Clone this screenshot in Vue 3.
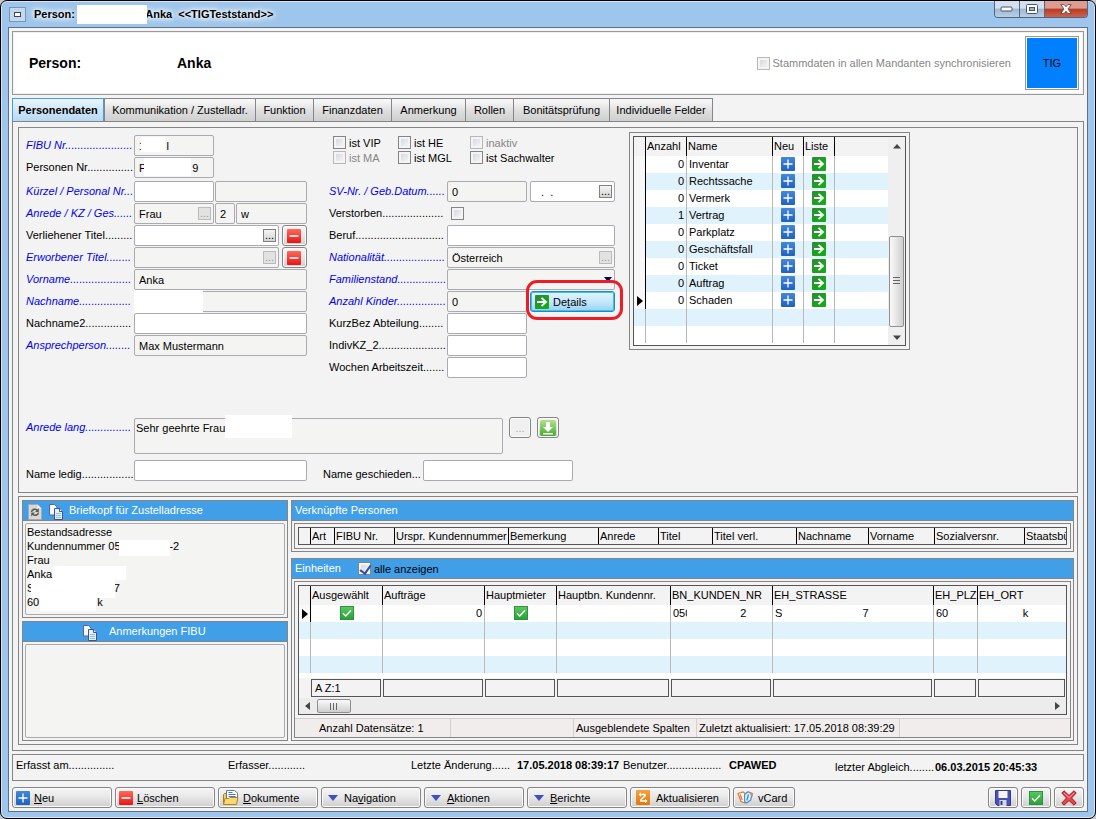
<script setup>
import { ref } from 'vue'

const dots = (n) => '.'.repeat(n)
const gap = (n) => '\u00a0'.repeat(n)

const tabs = [
  'Personendaten',
  'Kommunikation / Zustelladr.',
  'Funktion',
  'Finanzdaten',
  'Anmerkung',
  'Rollen',
  'Bonitätsprüfung',
  'Individuelle Felder',
]
const activeTab = ref(0)

const flags = [
  { id: 'vip', text: 'ist VIP' },
  { id: 'he', text: 'ist HE' },
  { id: 'inaktiv', text: 'inaktiv', off: true },
  { id: 'ma', text: 'ist MA', off: true },
  { id: 'mgl', text: 'ist MGL' },
  { id: 'sach', text: 'ist Sachwalter' },
]

const objects = [
  [0, 'Inventar'],
  [0, 'Rechtssache'],
  [0, 'Vermerk'],
  [1, 'Vertrag'],
  [0, 'Parkplatz'],
  [0, 'Geschäftsfall'],
  [0, 'Ticket'],
  [0, 'Auftrag'],
  [0, 'Schaden'],
]

const linkedCols = [
  'Art', 'FIBU Nr.', 'Urspr. Kundennummer', 'Bemerkung', 'Anrede', 'Titel',
  'Titel verl.', 'Nachname', 'Vorname', 'Sozialversnr.', 'Staatsbü',
]
const unitCols = [
  'Ausgewählt', 'Aufträge', 'Hauptmieter', 'Hauptbn. Kundennr.',
  'BN_KUNDEN_NR', 'EH_STRASSE', 'EH_PLZ', 'EH_ORT',
]
const salutation = ref('Sehr geehrte Frau')
const showAll = ref(true)
</script>

<template>
  <div class="window">
    <svg class="defs" width="0" height="0" aria-hidden="true">
      <defs>
        <linearGradient id="gBlue" x1="0" y1="0" x2="0" y2="1"><stop offset="0" stop-color="#4488d8" /><stop offset="1" stop-color="#1f62c0" /></linearGradient>
        <linearGradient id="gGreen" x1="0" y1="0" x2="1" y2="1"><stop offset="0" stop-color="#2f8a3a" /><stop offset="1" stop-color="#10b010" /></linearGradient>
        <linearGradient id="gRed" x1="0" y1="0" x2="0" y2="1"><stop offset="0" stop-color="#ff6a5c" /><stop offset="1" stop-color="#e81414" /></linearGradient>
        <linearGradient id="gCheck" x1="0" y1="0" x2="0" y2="1"><stop offset="0" stop-color="#5cc860" /><stop offset="1" stop-color="#28a038" /></linearGradient>
        <linearGradient id="gDown" x1="0" y1="0" x2="0" y2="1"><stop offset="0" stop-color="#b4e08c" /><stop offset="1" stop-color="#3fae2c" /></linearGradient>
        <linearGradient id="gOrange" x1="0" y1="0" x2="0" y2="1"><stop offset="0" stop-color="#f8a040" /><stop offset="1" stop-color="#e07808" /></linearGradient>
      </defs>
      <symbol id="iPlus" viewBox="0 0 14 14">
        <rect width="14" height="14" rx="1" fill="url(#gBlue)" /><path d="M7 2.5v9M2.5 7h9" stroke="#fff" stroke-width="1.3" />
      </symbol>
      <symbol id="iArrow" viewBox="0 0 14 14">
        <rect width="14" height="14" rx="1" fill="url(#gGreen)" /><path d="M2 7h9M6.500 2.800L11 7l-4.500 4.200" fill="none" stroke="#fff" stroke-width="1.800" />
      </symbol>
      <symbol id="iMinus" viewBox="0 0 14 14">
        <rect width="14" height="14" rx="1" fill="url(#gRed)" /><path d="M2.500 7h9" stroke="#fff" stroke-width="1.600" />
      </symbol>
      <symbol id="iCheck" viewBox="0 0 14 14">
        <rect x=".5" y=".5" width="13" height="13" fill="url(#gCheck)" stroke="#2c9440" /><path d="M3 7.200l2.800 2.800L11 4.200" fill="none" stroke="#fff" stroke-width="1.300" />
      </symbol>
      <symbol id="iDown" viewBox="0 0 16 16">
        <rect width="16" height="16" rx="2" fill="url(#gDown)" /><path d="M6 2h4v5h3l-5 5-5-5h3zM3 13h10v1.500H3z" fill="#fff" />
      </symbol>
      <symbol id="iTri" viewBox="0 0 10 6"><path d="M0 0h10L5 6z" fill="#3c4fc4" /></symbol>
      <symbol id="iCopy" viewBox="0 0 15 16">
        <path d="M1.500.5h5l2.500 2.500v8H1.500z" fill="#f4f8ff" stroke="#5a6498" /><path d="M6.500 4.500h5l3 3v8h-8z" fill="#e4f0fe" stroke="#44508a" /><path d="M11.500 4.500v3h3" fill="#fff" stroke="#44508a" /><path d="M8 9.500h5M8 11.500h5M8 13.500h5" stroke="#8ac0f4" />
      </symbol>
      <symbol id="iReload" viewBox="0 0 14 16">
        <path d="M.5.500h9l4 4v11H.5z" fill="#d8d8d4" stroke="#a8a8a8" /><path d="M9.500.500v4h4z" fill="#f6f6f6" /><path d="M3.500 8c.4-2.800 4-3.600 5.800-1.700M10.500 8.500c-.4 2.800-4 3.600-5.800 1.700" fill="none" stroke="#5c5c5c" stroke-width="1.600" /><path d="M10.800 4v4H7zM3.200 12.500v-4H7z" fill="#5c5c5c" />
      </symbol>
      <symbol id="iDocs" viewBox="0 0 17 17">
        <path d="M1.500 15.500V5.500l1-1H7l1 1" fill="#f0cf60" stroke="#a87c18" /><path d="M4.500 1.500h8l3 2.500v8h-11z" fill="#fff" stroke="#5878b0" /><path d="M6.500 3.500h4M6.500 5.500h7M6.500 7.500h7" stroke="#4878c8" /><path d="M1.500 15.500l1.500-6h4l1-1h8l-1.500 7z" fill="#f8d870" stroke="#b08420" />
      </symbol>
      <symbol id="iSync" viewBox="0 0 14 15">
        <rect width="14" height="15" rx="1" fill="url(#gOrange)" /><path d="M4 4.500h5v1.500L5 9.500V11h5" fill="none" stroke="#fff" stroke-width="1.600" /><path d="M2.500 4.500L5 2.300v4.400zM11.500 11L9 8.800v4.400z" fill="#fff" />
      </symbol>
      <symbol id="iCard" viewBox="0 0 17 13">
        <path d="M1 2.500l5-1.500 3 2-1 9-4-1.500z" fill="#fff" stroke="#e07828" stroke-width="1.200" /><path d="M7.500 3.500L11 .8l4.500 2-2 6.500-4 2.700-2-1.500z" fill="#d8ecfc" stroke="#4a90cc" stroke-width="1.200" /><path d="M11.500 3.500L9.800 9.500" fill="none" stroke="#3c86c8" stroke-width="1.200" /><path d="M3.200 3.500l2 5.500" stroke="#e86820" stroke-width="1.200" /><circle cx="14.500" cy="3" r="1.500" fill="#f08838" />
      </symbol>
      <symbol id="iSave" viewBox="0 0 16 16">
        <path d="M.5.500h15v15h-13l-2-2z" fill="#4c50b0" stroke="#363a8c" /><path d="M3.500 1h9v7h-9z" fill="#f4f6fc" /><path d="M4.500 10h7v6h-7z" fill="#d4d8ea" /><path d="M5.500 11h2v4h-2z" fill="#363a8c" />
      </symbol>
      <symbol id="iCross" viewBox="0 0 16 16">
        <path d="M3 .8L8 5.500 13 .8 15.200 3 10.500 8l4.700 5-2.200 2.200L8 10.500l-5 4.700L.8 13l4.700-5L.8 3z" fill="#e8444c" stroke="#a81420" /><path d="M3 3l5 4.600L13 3" fill="none" stroke="#f8a0a4" />
      </symbol>
      <symbol id="iUp" viewBox="0 0 8 5"><path d="M0 4.500L4 0l4 4.500z" fill="#444" /></symbol>
    </svg>

    <header class="titlebar">
      <button class="sysmenu" aria-label="Systemmenü"><span></span></button>
      <h1 class="caption">Person:{{ gap(23) }}Anka{{ gap(2) }}&lt;&lt;TIGTeststand&gt;&gt;<i class="mask mCaption"></i></h1>
      <div class="winbtns">
        <button aria-label="Minimieren"><svg width="14" height="6" viewBox="0 0 14 6"><rect x="1" y="1" width="11" height="4" rx="1" fill="#fff" stroke="#485468" /></svg></button>
        <button aria-label="Maximieren"><svg width="12" height="10" viewBox="0 0 12 10"><rect x=".5" y=".5" width="11" height="9" rx="1" fill="#fff" stroke="#485468" /><rect x="3.500" y="3.500" width="5" height="3" fill="#9fb4cc" stroke="#485468" /></svg></button>
        <button class="close" aria-label="Schließen"><svg width="12" height="10" viewBox="0 0 12 10"><path d="M.8.600h3.400L6 2.800 7.800.600h3.400L8 5l3.200 4.400H7.800L6 7.200 4.200 9.400H.8L4 5z" fill="#fff" stroke="#5a3a44" stroke-width=".8" /></svg></button>
      </div>
    </header>

    <main class="client">
      <section class="head">
        <h2><span>Person:</span><span>Anka</span></h2>
        <label class="chk off"><input type="checkbox" disabled />Stammdaten in allen Mandanten synchronisieren</label>
        <div class="tig">TIG</div>
      </section>

      <nav class="tabs" role="tablist">
        <button v-for="(t, i) in tabs" :key="t" role="tab" :aria-selected="i === activeTab" :class="{ active: i === activeTab }" @click="activeTab = i">{{ t }}</button>
      </nav>

      <div class="page">
        <section class="box form">
          <div class="cols">
            <div class="col left">
              <div class="row"><label class="key" for="fibu">FIBU Nr{{ dots(22) }}</label><span class="fld w80"><input id="fibu" readonly :value="'1' + gap(7) + 'l'" /><i class="mask mFibu"></i></span></div>
              <div class="row wide"><label for="pnr">Personen Nr{{ dots(15) }}</label><span class="fld w80"><input id="pnr" readonly :value="'P' + gap(15) + '9'" /><i class="mask mPnr"></i></span></div>
              <div class="row"><label class="key" for="kz">Kürzel / Personal Nr{{ dots(3) }}</label><span class="fld w80"><input id="kz" class="edit" /></span><span class="fld grow"><input aria-label="Personal Nr" readonly /></span></div>
              <div class="row"><label class="key" for="anr">Anrede / KZ / Ges{{ dots(6) }}</label><span class="fld w80"><input id="anr" readonly value="Frau" /><button class="more dim" disabled>...</button></span><span class="fld w20"><input aria-label="KZ" readonly value="2" /></span><span class="fld grow"><input aria-label="Geschlecht" readonly value="w" /></span></div>
              <div class="row"><label for="vt">Verliehener Titel{{ dots(9) }}</label><span class="fld grow"><input id="vt" class="edit" /><button class="more">...</button></span><button class="btn del" aria-label="Verliehenen Titel löschen"><svg width="14" height="14"><use href="#iMinus" /></svg></button></div>
              <div class="row"><label class="key" for="et">Erworbener Titel{{ dots(8) }}</label><span class="fld grow"><input id="et" readonly /><button class="more dim" disabled>...</button></span><button class="btn del" aria-label="Erworbenen Titel löschen"><svg width="14" height="14"><use href="#iMinus" /></svg></button></div>
              <div class="row"><label class="key" for="vn">Vorname{{ dots(20) }}</label><span class="fld grow"><input id="vn" readonly value="Anka" /></span></div>
              <div class="row"><label class="key" for="nn">Nachname{{ dots(17) }}</label><span class="fld grow"><input id="nn" readonly /><i class="mask mName"></i></span></div>
              <div class="row"><label for="nn2">Nachname2{{ dots(15) }}</label><span class="fld grow"><input id="nn2" class="edit" /></span></div>
              <div class="row"><label class="key" for="ap">Ansprechperson{{ dots(8) }}</label><span class="fld grow"><input id="ap" readonly value="Max Mustermann" /></span></div>
            </div>

            <div class="col mid">
              <div class="flags">
                <label v-for="f in flags" :key="f.id" class="chk" :class="{ off: f.off }"><input type="checkbox" :disabled="f.off" />{{ f.text }}</label>
              </div>
              <div class="row"><label class="key" for="sv">SV-Nr. / Geb.Datum{{ dots(6) }}</label><span class="fld w80"><input id="sv" readonly value="0" /></span><span class="fld w85"><input class="edit" aria-label="Geburtsdatum" :value="gap(2) + '.' + gap(2) + '.'" /><button class="more">...</button></span></div>
              <div class="row"><label for="vs">Verstorben{{ dots(20) }}</label><span class="chk lone"><input id="vs" type="checkbox" /></span></div>
              <div class="row"><label for="be">Beruf{{ dots(29) }}</label><span class="fld grow"><input id="be" class="edit" /></span></div>
              <div class="row"><label class="key" for="na">Nationalität{{ dots(20) }}</label><span class="fld grow"><input id="na" readonly value="Österreich" /><button class="more dim" disabled>...</button></span></div>
              <div class="row"><label class="key" for="fs">Familienstand{{ dots(16) }}</label><span class="fld grow"><select id="fs"><option></option></select><svg class="drop" width="8" height="5" viewBox="0 0 8 5"><path d="M0 0h8L4 5z" fill="#000060" /></svg></span></div>
              <div class="row"><label class="key" for="ak">Anzahl Kinder{{ dots(16) }}</label><span class="fld w80"><input id="ak" readonly value="0" /></span><span class="detailwrap"><button class="btn detail"><svg width="14" height="14"><use href="#iArrow" /></svg><span>De<u>t</u>ails</span></button><i class="ring"></i></span></div>
              <div class="row"><label for="kb">KurzBez Abteilung{{ dots(8) }}</label><span class="fld w80"><input id="kb" class="edit" /></span></div>
              <div class="row"><label for="ik">IndivKZ_2{{ dots(22) }}</label><span class="fld w80"><input id="ik" class="edit" /></span></div>
              <div class="row"><label for="wa">Wochen Arbeitszeit{{ dots(7) }}</label><span class="fld w80"><input id="wa" class="edit" /></span></div>
            </div>

            <div class="frame objects">
              <div class="sheet">
                <table>
                  <colgroup><col class="cGut" /><col class="cAnz" /><col class="cNam" /><col class="cIco" /><col class="cIco" /><col /></colgroup>
                  <thead><tr><th></th><th>Anzahl</th><th>Name</th><th>Neu</th><th>Liste</th><th></th></tr></thead>
                  <tbody>
                    <tr v-for="(o, i) in objects" :key="o[1]" class="data">
                      <td><svg v-if="i === 8" class="cursor" width="6" height="10" viewBox="0 0 6 10"><path d="M0 0l6 5-6 5z" /></svg></td>
                      <td class="num">{{ o[0] }}</td>
                      <td>{{ o[1] }}</td>
                      <td class="ico"><button class="cellbtn" :aria-label="o[1] + ' neu'"><svg width="14" height="14"><use href="#iPlus" /></svg></button></td>
                      <td class="ico"><button class="cellbtn" :aria-label="o[1] + ' Liste'"><svg width="14" height="14"><use href="#iArrow" /></svg></button></td>
                      <td></td>
                    </tr>
                    <tr v-for="n in 2" :key="n"><td v-for="c in 6" :key="c"></td></tr>
                  </tbody>
                </table>
                <div class="vscroll">
                  <svg width="8" height="5"><use href="#iUp" /></svg>
                  <div class="thumb"></div>
                  <svg class="flip" width="8" height="5"><use href="#iUp" /></svg>
                </div>
              </div>
            </div>
          </div>

          <div class="row salute">
            <label class="key" for="al">Anrede lang{{ dots(15) }}</label>
            <span class="fld area"><textarea id="al" v-model="salutation" readonly></textarea><i class="mask mSal"></i></span>
            <button class="btn sq first" disabled>...</button>
            <button class="btn sq" aria-label="Anrede übernehmen"><svg width="16" height="16"><use href="#iDown" /></svg></button>
          </div>
          <div class="row names">
            <label for="nl">Name ledig{{ dots(17) }}</label><span class="fld w173"><input id="nl" class="edit" /></span>
            <label class="second" for="ng">Name geschieden{{ dots(3) }}</label><span class="fld w150"><input id="ng" class="edit" /></span>
          </div>
        </section>

        <section class="box lower">
          <div class="side">
            <section class="panel">
              <h3 class="bar icons"><svg width="14" height="16"><use href="#iReload" /></svg><svg width="15" height="16"><use href="#iCopy" /></svg><span>Briefkopf für Zustelladresse</span></h3>
              <address class="text">
                <div>Bestandsadresse</div>
                <div>Kundennummer 05{{ gap(16) }}-2<i class="mask m1"></i></div>
                <div>Frau</div>
                <div>Anka<i class="mask m2"></i></div>
                <div>S{{ gap(26) }}7<i class="mask m3"></i></div>
                <div>60{{ gap(19) }}k<i class="mask m4"></i></div>
              </address>
            </section>
            <section class="panel fill">
              <h3 class="bar icons note"><svg width="15" height="16"><use href="#iCopy" /></svg><span>Anmerkungen FIBU</span></h3>
              <textarea class="text" aria-label="Anmerkungen FIBU" readonly></textarea>
            </section>
          </div>

          <div class="main">
            <section class="panel">
              <h3 class="bar">Verknüpfte Personen</h3>
              <div class="frame">
                <div class="sheet">
                  <table class="linked">
                    <colgroup><col class="cGut" /><col v-for="(c, i) in linkedCols" :key="c" :class="'l' + i" /></colgroup>
                    <thead><tr><th></th><th v-for="c in linkedCols" :key="c">{{ c }}</th></tr></thead>
                  </table>
                </div>
              </div>
            </section>

            <section class="panel">
              <h3 class="bar">Einheiten<label class="chk all"><input v-model="showAll" type="checkbox" />alle anzeigen</label></h3>
              <div class="frame units">
                <div class="sheet stack">
                  <table>
                    <colgroup><col class="cGut" /><col v-for="(c, i) in unitCols" :key="c" :class="'u' + i" /></colgroup>
                    <thead><tr><th></th><th v-for="c in unitCols" :key="c">{{ c }}</th></tr></thead>
                    <tbody>
                      <tr class="data">
                        <td><svg class="cursor" width="6" height="10" viewBox="0 0 6 10"><path d="M0 0l6 5-6 5z" /></svg></td>
                        <td class="ico"><svg width="14" height="14"><use href="#iCheck" /></svg></td>
                        <td class="num">0</td>
                        <td class="ico"><svg width="14" height="14"><use href="#iCheck" /></svg></td>
                        <td></td>
                        <td>050{{ gap(16) }}2<i class="mask mNr"></i></td>
                        <td>S{{ gap(25) }}-7<i class="mask mStr"></i></td>
                        <td>60</td>
                        <td>{{ gap(14) }}k</td>
                      </tr>
                      <tr v-for="n in 3" :key="n"><td v-for="c in 9" :key="c"></td></tr>
                    </tbody>
                    <tfoot>
                      <tr class="spacer"><td colspan="9"></td></tr>
                      <tr><td></td><td v-for="(c, i) in unitCols" :key="c"><div>{{ i ? '' : 'A Z:1' }}</div></td></tr>
                    </tfoot>
                  </table>
                  <div class="hscroll">
                    <svg width="5" height="8" viewBox="0 0 5 8"><path d="M5 0L0 4l5 4z" fill="#444" /></svg>
                    <div class="thumb"></div>
                    <svg width="5" height="8" viewBox="0 0 5 8"><path d="M0 0l5 4-5 4z" fill="#444" /></svg>
                  </div>
                </div>
                <div class="info"><span>Anzahl Datensätze: 1</span><span></span><span>Ausgeblendete Spalten</span><span>Zuletzt aktualisiert: 17.05.2018 08:39:29</span><span></span></div>
              </div>
            </section>
          </div>
        </section>
      </div>

      <section class="status">
        <span>Erfasst am{{ dots(15) }}</span><span>Erfasser{{ dots(12) }}</span><span>Letzte Änderung{{ dots(6) }}</span><b>17.05.2018 08:39:17</b><span>Benutzer{{ dots(18) }}</span><b>CPAWED</b><span class="low">letzter Abgleich{{ dots(8) }}</span><b class="low">06.03.2015 20:45:33</b>
      </section>

      <footer class="actions">
        <button class="btn"><svg width="14" height="14"><use href="#iPlus" /></svg><span><u>N</u>eu</span></button>
        <button class="btn"><svg width="14" height="14"><use href="#iMinus" /></svg><span><u>L</u>öschen</span></button>
        <button class="btn"><svg width="17" height="17"><use href="#iDocs" /></svg><span><u>D</u>okumente</span></button>
        <button class="btn menu"><svg width="10" height="6"><use href="#iTri" /></svg><span>Na<u>v</u>igation</span></button>
        <button class="btn menu"><svg width="10" height="6"><use href="#iTri" /></svg><span><u>A</u>ktionen</span></button>
        <button class="btn menu"><svg width="10" height="6"><use href="#iTri" /></svg><span><u>B</u>erichte</span></button>
        <button class="btn sync"><svg width="14" height="15"><use href="#iSync" /></svg><span>Aktualisieren</span></button>
        <button class="btn card"><svg width="17" height="13"><use href="#iCard" /></svg><span>vCard</span></button>
        <span class="push"></span>
        <button class="btn icon" aria-label="Speichern"><svg width="16" height="16"><use href="#iSave" /></svg></button>
        <button class="btn icon" aria-label="OK"><svg width="14" height="14"><use href="#iCheck" /></svg></button>
        <button class="btn icon" aria-label="Abbrechen"><svg width="16" height="16"><use href="#iCross" /></svg></button>
      </footer>
    </main>
  </div>
</template>

<style>
body {
  background: #c8c8c8;
}
</style>

<style scoped>
.window,
.window * {
  box-sizing: border-box;
}
.window {
  min-height: 100vh;
  padding: 0 7px 6px;
  border: 1px solid #000;
  border-radius: 7px;
  background: #9ec5eb;
  box-shadow: inset 0 0 0 1px #d4e6f8;
  color: #000;
  font: 11px/14px "Liberation Sans", Arial, sans-serif;
  display: flex;
  flex-direction: column;
}
.defs {
  position: absolute;
}
button,
input,
select,
textarea {
  font: inherit;
  color: inherit;
  margin: 0;
}
svg {
  display: block;
  flex: none;
}
h1, h2, h3 {
  margin: 0;
  font: inherit;
}
i.mask {
  position: absolute;
  background: #fff;
}

/* title bar */
.titlebar {
  display: flex;
  height: 26px;
  align-items: center;
}
.sysmenu {
  width: 17px;
  height: 15px;
  margin-left: 1px;
  padding: 4px;
  border: 1px solid #7b94b0;
  background: #c2d8ee;
}
.sysmenu span {
  display: block;
  height: 5px;
  border: 1px solid #444;
  background: #fff;
}
.caption {
  position: relative;
  margin-left: 8px;
  font-weight: bold;
  white-space: pre;
  text-shadow: 0 0 4px #fff, 0 0 6px #fff, 0 0 8px #fff;
}
.mCaption {
  left: 43px;
  top: -2px;
  width: 70px;
  height: 19px;
}
.winbtns {
  display: flex;
  align-self: flex-start;
  margin-left: auto;
  height: 17px;
  border: 1px solid #56657a;
  border-top: 0;
  border-radius: 0 0 4px 4px;
  overflow: hidden;
}
.winbtns button {
  width: 25px;
  display: flex;
  align-items: center;
  justify-content: center;
  padding: 0;
  border: 0;
  border-right: 1px solid #56657a;
  background: linear-gradient(#d2e0f0 45%, #9fb8d4 50%, #b8cfe6);
}
.winbtns .close {
  width: 42px;
  border: 0;
  background: linear-gradient(#dc9c90 45%, #b83a24 50%, #cc6450);
}

.client {
  display: flex;
  flex: 1;
  flex-direction: column;
  padding: 3px;
  border: 1px solid #5f7285;
  background: #f3f3f3;
}

/* header */
.head {
  display: flex;
  align-items: center;
  height: 64px;
  padding: 0 4px 0 16px;
  border: 1px solid #999;
  box-shadow: inset 0 0 0 1px #f0f0f0;
  background: #fff;
}
.head h2 {
  display: grid;
  grid-template-columns: 148px auto;
  font: bold 14px/18px "Liberation Sans", Arial, sans-serif;
}
.head .chk {
  margin-left: auto;
}
.tig {
  display: flex;
  align-items: center;
  justify-content: center;
  width: 54px;
  height: 54px;
  margin-left: 14px;
  border: 1px solid #999;
  background: #0080ff;
  box-shadow: inset 0 0 0 1px #fff;
}

.chk {
  display: flex;
  align-items: center;
  gap: 3px;
  white-space: nowrap;
}
.chk input {
  position: relative;
  flex: none;
  width: 13px;
  height: 13px;
  appearance: none;
  border: 1px solid #858585;
  background: linear-gradient(135deg, #cfd3da, #fafafa);
  box-shadow: inset 0 0 0 2px #f4f4f4;
}
.chk.off {
  color: #868686;
}
.chk.off input {
  border-color: #b8b8b8;
}
.chk input:checked::after {
  content: "";
  position: absolute;
  left: 3px;
  top: 0;
  width: 5px;
  height: 9px;
  border: solid #354f9c;
  border-width: 0 2px 2px 0;
  transform: rotate(35deg);
}

/* tabs */
.tabs {
  display: grid;
  grid-template-columns: 92px 151px 58px 78px 74px 48px 96px 104px;
  height: 24px;
  margin: 3px 0 -1px;
}
.tabs button {
  padding: 0;
  border: 1px solid #85858c;
  border-right-width: 0;
  background: linear-gradient(#f6f6f6 10%, #dedede 55%, #cfcfcf);
  white-space: nowrap;
}
.tabs button:last-child {
  border-right-width: 1px;
}
.tabs button.active {
  border: 1px solid #3f9ee8;
  border-bottom-color: #9ccbf0;
  background: linear-gradient(#eaf5fd, #b7d8f2);
  font-weight: bold;
}

.page {
  padding: 5px;
  border: 1px solid #858585;
}
.box {
  border: 1px solid #858585;
}

/* form */
.form {
  height: 366px;
  padding: 4px 7px;
}
.cols {
  display: flex;
  height: 221px;
}
.col {
  padding-top: 3px;
}
.left {
  width: 281px;
}
.mid {
  width: 286px;
  margin: 0 14px 0 22px;
}
.row {
  display: flex;
  gap: 1px;
  height: 21px;
  margin-bottom: 1px;
}
.row.wide {
  margin-bottom: 3px;
}
.row > label {
  width: 107px;
  flex: none;
  white-space: nowrap;
  line-height: 21px;
}
.mid .row {
  gap: 3px;
}
.mid .row > label {
  width: 115px;
}
.key {
  color: #0000f0;
  font-style: italic;
}
.fld {
  position: relative;
  display: block;
}
.grow { flex: 1; }
.w20 { width: 20px; }
.w80 { width: 80px; }
.w85 { width: 85px; }
.w150 { width: 150px; }
.w173 { width: 173px; }
.fld input,
.fld select,
.fld textarea {
  display: block;
  width: 100%;
  height: 100%;
  padding: 0 4px;
  border: 1px solid #a9abb0;
  border-radius: 2px;
  outline: 0;
  appearance: none;
  background: #f4f4f2;
  resize: none;
}
.fld .edit {
  background: #fff;
}
.more {
  position: absolute;
  right: 3px;
  top: 4px;
  width: 13px;
  height: 13px;
  padding: 0;
  border: 1px solid #808080;
  background: linear-gradient(#f4f4f4, #d4d4d4);
  line-height: 7px;
}
.more.dim {
  border-color: #bbb;
  background: #e2e2e2;
  color: #999;
}
.btn {
  display: flex;
  align-items: center;
  padding: 0 3px;
  border: 1px solid #858585;
  border-radius: 3px;
  background: linear-gradient(#f6f6f6, #e8e8e8 45%, #cfcfcf);
  box-shadow: inset 0 0 0 1px #fbfbfb;
  white-space: nowrap;
}
.del {
  width: 25px;
  margin-left: 2px;
  padding-left: 4px;
}
.drop {
  position: absolute;
  right: 3px;
  top: 8px;
}
.lone {
  padding-left: 4px;
}
.detailwrap {
  position: relative;
  width: 85px;
}
.detail {
  width: 100%;
  height: 100%;
  padding-left: 4px;
  gap: 4px;
  border: 1px solid #1c8cbc;
  background: linear-gradient(#e4f4fd, #c6e8fa 50%, #98d2f4);
  box-shadow: inset 0 0 0 1px #40c0f0;
}
.ring {
  position: absolute;
  inset: -11px -8px -8px -4px;
  border: 3px solid #ee1c25;
  border-radius: 11px;
}
.flags {
  display: grid;
  grid-template-columns: 65px 72px auto;
  grid-auto-rows: 15px;
  padding-left: 4px;
  margin-bottom: 16px;
}
.mFibu { left: 7px; top: 2px; width: 24px; height: 15px; }
.mPnr { left: 10px; top: 1px; width: 47px; height: 18px; }
.mName { left: 0; top: -1px; width: 69px; height: 23px; }
.mSal { left: 91px; top: -3px; width: 67px; height: 23px; }

.salute {
  height: 36px;
  margin: 65px 0 6px;
}
.salute > label {
  line-height: 19px;
}
.area {
  width: 369px;
}
.area textarea {
  padding: 2px 1px;
}
.sq {
  width: 22px;
  height: 21px;
  margin: -1px 0 0 5px;
  padding: 0 2px;
}
.sq.first {
  justify-content: center;
  background: #f0f0f0;
  color: #aaa;
}
.names > label {
  line-height: 28px;
}
.names > .second {
  width: 99px;
  margin-left: 15px;
}

/* data sheets */
.frame {
  padding: 3px;
  border: 1px solid #858585;
}
.objects {
  width: 281px;
  height: 218px;
}
.sheet {
  display: flex;
  height: 100%;
  border: 1px solid #555;
  background: #fff;
  overflow: hidden;
}
.sheet.stack {
  display: block;
  height: auto;
}
table {
  flex: 1;
  width: 100%;
  min-width: 0;
  table-layout: fixed;
  border-collapse: separate;
  border-spacing: 0;
  align-self: flex-start;
}
th,
td {
  position: relative;
  padding: 0 2px;
  border-left: 1px solid #b8b8b8;
  text-align: left;
  font-weight: normal;
  white-space: nowrap;
  overflow: hidden;
}
th {
  height: 19px;
  padding: 0 0 2px 1px;
  border-left-color: #000;
  background: #f3f3f3;
}
td {
  height: 17px;
  line-height: 17px;
}
th:first-child,
td:first-child {
  border-left: 0;
}
tbody tr:nth-child(even) td {
  background: #e0f2fc;
}
tbody .data td:first-child {
  background: #f8f8f8;
}
tbody .data td:nth-child(2) {
  border-left-color: #000;
}
.num {
  text-align: right;
}
.ico {
  padding-bottom: 2px;
}
.ico svg {
  margin: 0 auto;
}
.cellbtn {
  display: block;
  margin: 0 auto;
  padding: 0;
  border: 0;
  background: none;
}
.cursor {
  margin-left: 1px;
}
.cGut { width: 11px; }
.cAnz { width: 41px; }
.cNam { width: 86px; }
.cIco { width: 31px; }
.vscroll {
  display: flex;
  flex: none;
  flex-direction: column;
  align-items: center;
  width: 17px;
  padding: 7px 0 5px;
  background: #efefef;
}
.thumb {
  border: 1px solid #8f8f8f;
  border-radius: 2px;
}
.vscroll .thumb {
  width: 15px;
  height: 91px;
  margin: auto 0 8px;
  background:
    repeating-linear-gradient(#666 0 1px, transparent 1px 3px) center / 7px 9px no-repeat,
    linear-gradient(90deg, #fafafa, #cfcfcf);
}
.flip {
  transform: rotate(180deg);
}

/* lower part */
.lower {
  display: grid;
  grid-template-columns: 266px minmax(0, 1fr);
  gap: 3px;
  margin-top: 3px;
  padding: 3px;
}
.side,
.main {
  display: flex;
  flex-direction: column;
  gap: 3px;
}
.main {
  gap: 6px;
}
.panel {
  display: flex;
  flex-direction: column;
  padding-bottom: 2px;
  border: 1px solid #858585;
}
.panel.fill {
  flex: 1;
}
.bar {
  display: flex;
  align-items: center;
  height: 20px;
  margin-bottom: 2px;
  padding: 0 3px 2px;
  border-bottom: 1px solid #858585;
  background: #419fe8;
  color: #fff;
}
.panel .frame {
  margin: 0 2px;
}
.bar.icons {
  padding: 2px 5px 0;
  gap: 6px;
}
.icons span {
  padding-bottom: 4px;
}
.bar.note {
  padding-left: 59px;
  gap: 12px;
}
.text {
  display: block;
  height: 92px;
  margin: 0 2px;
  padding: 1px;
  border: 1px solid #a9abb0;
  border-radius: 2px;
  background: #f4f4f2;
  font-style: normal;
  white-space: nowrap;
  resize: none;
  outline: 0;
}
.fill .text {
  flex: 1;
}
.text div {
  position: relative;
}
.m1 { left: 92px; top: 1px; width: 51px; height: 16px; }
.m2 { left: 26px; top: -1px; width: 73px; height: 14px; }
.m3 { left: 4px; top: -3px; width: 84px; height: 20px; }
.m4 { left: 13px; top: 0; width: 56px; height: 16px; }

.l0 { width: 24px; }
.l1 { width: 60px; }
.l2 { width: 114px; }
.l3 { width: 90px; }
.l4 { width: 60px; }
.l5 { width: 54px; }
.l6 { width: 84px; }
.l7 { width: 72px; }
.l8 { width: 66px; }
.l9 { width: 90px; }
.linked th {
  height: 16px;
  padding-bottom: 0;
}
.u0 { width: 72px; }
.u1 { width: 102px; }
.u2 { width: 72px; }
.u3 { width: 114px; }
.u4 { width: 102px; }
.u5 { width: 161px; }
.u6 { width: 44px; }
.mNr { left: 16px; top: 0; width: 53px; height: 17px; }
.mStr { left: 9px; top: 0; width: 80px; height: 17px; }
.all {
  margin: 2px 0 0 17px;
  color: #000;
}
.panel .frame.units {
  padding-bottom: 0;
}
tfoot td {
  height: 20px;
  padding: 0 1px;
  border: 0;
  background: #f3f3f3;
}
tfoot div {
  height: 18px;
  padding-left: 3px;
  border: 1px solid #555;
}
tfoot .spacer td {
  height: 5px;
  background: #fff;
}
.hscroll {
  display: flex;
  align-items: center;
  height: 16px;
  padding: 0 6px;
  background: #ececec;
}
.hscroll .thumb {
  width: 34px;
  height: 14px;
  margin: 0 auto 0 7px;
  background:
    repeating-linear-gradient(90deg, #666 0 1px, transparent 1px 3px) center / 9px 7px no-repeat,
    linear-gradient(#fafafa, #cfcfcf);
}
.info {
  display: grid;
  grid-template-columns: 156px 123px 123px 203px 1fr;
  height: 19px;
  margin: 3px -3px 0;
  border-top: 1px solid #d4d0d0;
  background: #f1eded;
  line-height: 18px;
}
.info span {
  padding-left: 2px;
  border-right: 1px solid #d4d0d0;
}
.info span:first-child {
  padding-left: 24px;
}
.info span:last-child {
  border-right: 0;
}

/* status */
.status {
  display: grid;
  grid-template-columns: 212px 183px 106px 106px 106px 106px 100px 1fr;
  height: 27px;
  margin: 3px 0 6px;
  padding: 3px;
  border: 1px solid #858585;
  white-space: nowrap;
}
.low {
  padding-top: 2px;
}

.actions {
  display: flex;
  gap: 3px;
  height: 21px;
}
.actions .btn {
  width: 100px;
  gap: 4px;
}
.actions .btn.menu {
  padding-left: 6px;
  gap: 6px;
}
.actions .btn.sync {
  padding-left: 5px;
  gap: 6px;
}
.actions .btn.card {
  width: 62px;
}
.actions .btn.icon {
  width: 30px;
  justify-content: center;
}
.push {
  flex: 1;
  margin-right: -3px;
}
</style>
